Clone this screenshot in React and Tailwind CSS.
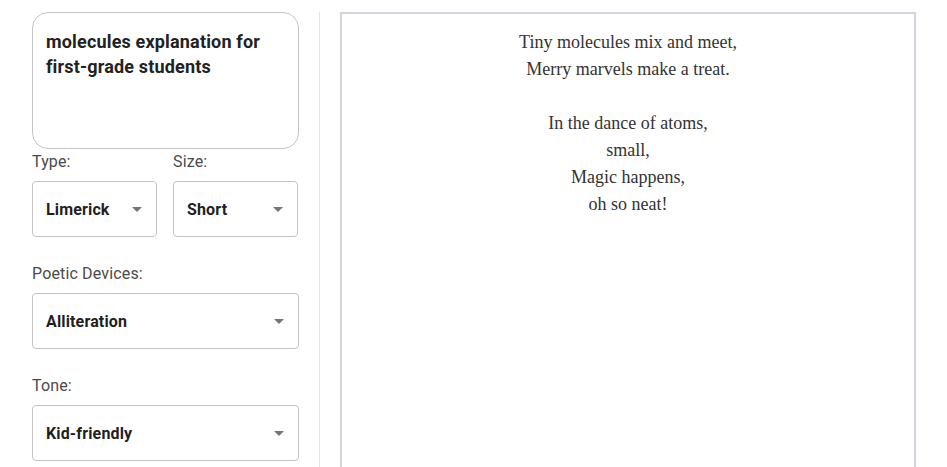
import React from "react";

function Arrow() {
  return (
    <svg width="24" height="24" viewBox="0 0 24 24" className="absolute right-[7px] top-1/2 -translate-y-1/2" fill="#757575">
      <path d="M7 10l5 5 5-5z" />
    </svg>
  );
}

function Select({ value, className = "" }) {
  return (
    <div className={`relative h-[56px] rounded-[4px] border border-[#c4c4c4] bg-white flex items-center pl-[13px] pt-[2px] ${className}`}>
      <span className="text-[16px] font-bold tracking-[0.15px] text-[#1f1f1f]">{value}</span>
      <Arrow />
    </div>
  );
}

function Label({ children }) {
  return <div className="h-[24px] leading-[26px] text-[16px] tracking-[0.15px] text-[#4a4a4a] mb-[8px]">{children}</div>;
}

export default function App() {
  const lines = [
    "Tiny molecules mix and meet,",
    "Merry marvels make a treat.",
    "",
    "In the dance of atoms,",
    "small,",
    "Magic happens,",
    "oh so neat!",
  ];
  return (
    <div className="h-[467px] w-[947px] overflow-hidden bg-white flex pt-[12px] pl-[32px]" style={{ fontFamily: "Roboto, 'Liberation Sans', sans-serif" }}>
      <div className="w-[267px] shrink-0 flex flex-col">
        <div className="h-[137px] rounded-[16px] border border-[#c4c4c4] px-[13px] pt-[16px] text-[18px] leading-[25px] font-bold tracking-[0.17px] text-[#222]">
          molecules explanation for first-grade students
        </div>
        <div className="flex gap-[16px]">
          <div className="w-[125px]">
            <Label>Type:</Label>
            <Select value="Limerick" />
          </div>
          <div className="w-[125px]">
            <Label>Size:</Label>
            <Select value="Short" />
          </div>
        </div>
        <div className="mt-[24px]">
          <Label>Poetic Devices:</Label>
          <Select value="Alliteration" />
        </div>
        <div className="mt-[24px]">
          <Label>Tone:</Label>
          <Select value="Kid-friendly" />
        </div>
      </div>
      <div className="mx-[20px] w-px bg-[#e3e3e3] shrink-0" />
      <div className="w-[576px] shrink-0 border-2 border-b-0 border-[#d1d5db] pt-[15px] text-center text-[18px] leading-[27px] text-[#333]" style={{ fontFamily: "'Liberation Serif', 'Times New Roman', serif" }}>
        {lines.map((l, i) => (
          <div key={i} className="h-[27px]">{l}</div>
        ))}
      </div>
    </div>
  );
}
